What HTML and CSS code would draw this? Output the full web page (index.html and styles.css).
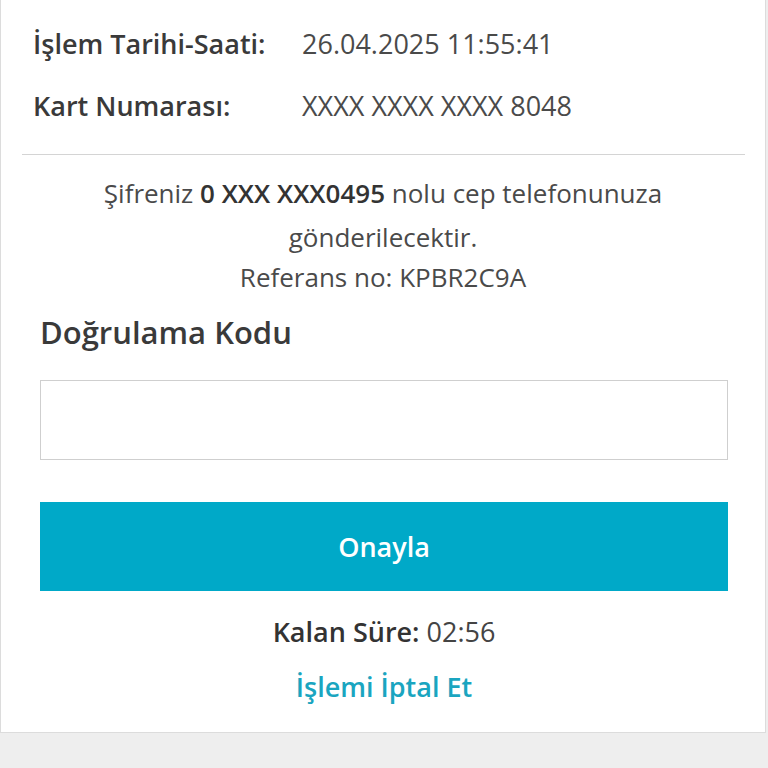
FILE: index.html
```html
<!DOCTYPE html>
<html lang="tr">
<head>
<meta charset="UTF-8">
<meta name="viewport" content="width=device-width, initial-scale=1.0">
<title>3D Secure Doğrulama</title>
<link rel="stylesheet" href="styles.css">
</head>
<body>
<div class="card">
  <div class="info">
    <div class="info-row">
      <span class="label">İşlem Tarihi-Saati:</span>
      <span class="value">26.04.2025 11:55:41</span>
    </div>
    <div class="info-row">
      <span class="label">Kart Numarası:</span>
      <span class="value">XXXX XXXX XXXX 8048</span>
    </div>
  </div>
  <hr class="sep">
  <p class="notice">Şifreniz <b>0 XXX XXX0495</b> nolu cep telefonunuza gönderilecektir.</p>
  <p class="ref">Referans no: KPBR2C9A</p>
  <div class="form">
    <label class="form-title" for="code">Doğrulama Kodu</label>
    <input class="code-input" id="code" type="text" autocomplete="one-time-code">
    <button class="btn-confirm">Onayla</button>
    <div class="timer"><b>Kalan Süre:</b> 02:56</div>
    <a class="cancel" href="#">İşlemi İptal Et</a>
  </div>
</div>
</body>
</html>
```

FILE: styles.css
```css
* { margin: 0; padding: 0; box-sizing: border-box; }
body {
  font-family: "Open Sans", Lato, sans-serif;
  background: #eeeeee;
  color: #444;
}
.card {
  width: 766px;
  background: #fff;
  border: 1px solid #dcdcdc;
  border-top: none;
  padding-bottom: 30px;
}

.info { padding: 12px 0 0 32px; }
.info-row { display: flex; align-items: center; height: 62px; }
.label { width: 269px; font-size: 27px; font-weight: 600; color: #3a3a3a; }
.value { font-size: 27px; color: #4a4a4a; }

.sep { margin: 18px 20px 0 21px; border: none; border-top: 1px solid #d4d4d4; }

.notice {
  margin: 16px auto 0; width: 620px;
  text-align: center; font-size: 26px; line-height: 44px; color: #4a4a4a;
}
.notice b { font-weight: 600; color: #333; }
.ref { text-align: center; font-size: 26px; line-height: 36px; color: #4a4a4a; }

.form { display: flex; flex-direction: column; margin: 0 37px 0 39px; }
.form-title { font-size: 31px; font-weight: 600; color: #3a3a3a; margin-top: 19px; line-height: 36px; }
.code-input {
  margin-top: 30px; height: 80px;
  border: 1px solid #cfcfcf; font: inherit; font-size: 26px; padding: 0 16px;
  outline: none;
}
.btn-confirm {
  margin-top: 42px; height: 89px;
  background: #00a9c8; color: #fff; border: none;
  font-family: inherit; font-size: 27px; font-weight: 600;
}
.timer { margin-top: 26px; text-align: center; font-size: 27px; line-height: 30px; color: #444; }
.timer b { font-weight: 600; color: #333; }
.cancel {
  margin-top: 25px; text-align: center; font-size: 27px; font-weight: 600; line-height: 30px;
  color: #1aa5c0; text-decoration: none;
}
```
